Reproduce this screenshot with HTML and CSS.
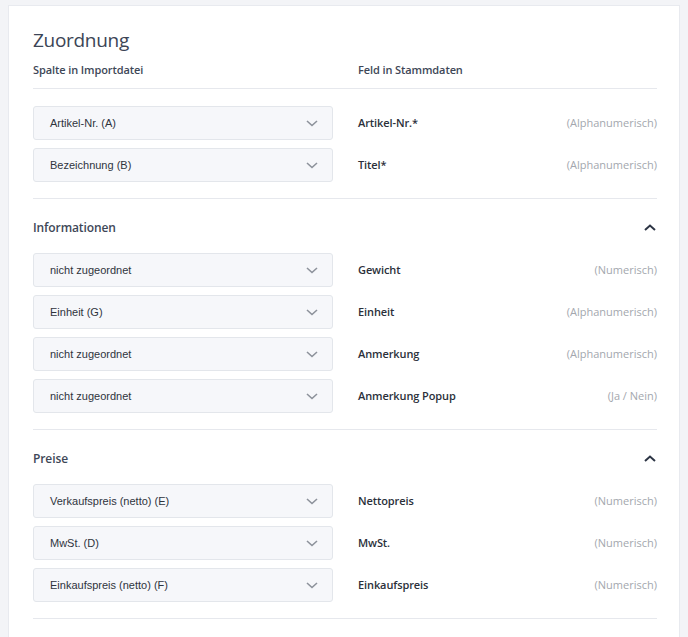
FILE: index.html
```html
<!DOCTYPE html>
<html lang="de">
<head>
<meta charset="utf-8">
<title>Zuordnung</title>
<link rel="stylesheet" href="styles.css">
</head>
<body>
<main class="card">
  <h1 class="title">Zuordnung</h1>
  <div class="cols-head">
    <div class="col-h">Spalte in Importdatei</div>
    <div class="col-h">Feld in Stammdaten</div>
  </div>

  <section class="group first">
    <div class="rows">
      <div class="row">
        <div class="select"><span>Artikel-Nr. (A)</span><svg class="chev" viewBox="0 0 12 7"><path d="M1 1l5 4.5L11 1"/></svg></div>
        <div class="field"><span class="name">Artikel-Nr.*</span><span class="type">(Alphanumerisch)</span></div>
      </div>
      <div class="row">
        <div class="select"><span>Bezeichnung (B)</span><svg class="chev" viewBox="0 0 12 7"><path d="M1 1l5 4.5L11 1"/></svg></div>
        <div class="field"><span class="name">Titel*</span><span class="type">(Alphanumerisch)</span></div>
      </div>
    </div>
  </section>

  <section class="group">
    <div class="group-head"><span>Informationen</span><svg class="up" viewBox="0 0 12 7"><path d="M1 6l5-4.5L11 6"/></svg></div>
    <div class="rows">
      <div class="row">
        <div class="select"><span>nicht zugeordnet</span><svg class="chev" viewBox="0 0 12 7"><path d="M1 1l5 4.5L11 1"/></svg></div>
        <div class="field"><span class="name">Gewicht</span><span class="type">(Numerisch)</span></div>
      </div>
      <div class="row">
        <div class="select"><span>Einheit (G)</span><svg class="chev" viewBox="0 0 12 7"><path d="M1 1l5 4.5L11 1"/></svg></div>
        <div class="field"><span class="name">Einheit</span><span class="type">(Alphanumerisch)</span></div>
      </div>
      <div class="row">
        <div class="select"><span>nicht zugeordnet</span><svg class="chev" viewBox="0 0 12 7"><path d="M1 1l5 4.5L11 1"/></svg></div>
        <div class="field"><span class="name">Anmerkung</span><span class="type">(Alphanumerisch)</span></div>
      </div>
      <div class="row">
        <div class="select"><span>nicht zugeordnet</span><svg class="chev" viewBox="0 0 12 7"><path d="M1 1l5 4.5L11 1"/></svg></div>
        <div class="field"><span class="name">Anmerkung Popup</span><span class="type">(Ja / Nein)</span></div>
      </div>
    </div>
  </section>

  <section class="group">
    <div class="group-head"><span>Preise</span><svg class="up" viewBox="0 0 12 7"><path d="M1 6l5-4.5L11 6"/></svg></div>
    <div class="rows">
      <div class="row">
        <div class="select"><span>Verkaufspreis (netto) (E)</span><svg class="chev" viewBox="0 0 12 7"><path d="M1 1l5 4.5L11 1"/></svg></div>
        <div class="field"><span class="name">Nettopreis</span><span class="type">(Numerisch)</span></div>
      </div>
      <div class="row">
        <div class="select"><span>MwSt. (D)</span><svg class="chev" viewBox="0 0 12 7"><path d="M1 1l5 4.5L11 1"/></svg></div>
        <div class="field"><span class="name">MwSt.</span><span class="type">(Numerisch)</span></div>
      </div>
      <div class="row">
        <div class="select"><span>Einkaufspreis (netto) (F)</span><svg class="chev" viewBox="0 0 12 7"><path d="M1 1l5 4.5L11 1"/></svg></div>
        <div class="field"><span class="name">Einkaufspreis</span><span class="type">(Numerisch)</span></div>
      </div>
    </div>
  </section>
</main>
</body>
</html>
```

FILE: styles.css
```css
* { box-sizing: border-box; }

html, body {
  margin: 0;
  padding: 0;
  background: #f3f4f7;
  height: 100%;
}

body {
  font-family: "Open Sans", "Noto Sans", sans-serif;
  color: #2e3440;
  overflow: hidden;
}

.card {
  margin: 5px 8px 0 8px;
  background: #ffffff;
  border: 1px solid #e8eaef;
  border-bottom: none;
  padding: 22px 22px 0 24px;
  height: calc(100vh - 5px);
  overflow: hidden;
}

.title {
  margin: 0;
  font-size: 19px;
  line-height: 24px;
  font-weight: 400;
  letter-spacing: -0.3px;
  color: #3c4556;
}

.cols-head {
  display: grid;
  grid-template-columns: 300px 1fr;
  column-gap: 25px;
  margin-top: 10px;
  padding-bottom: 10px;
  border-bottom: 1px solid #e6e8ed;
}

.col-h {
  font-size: 11px;
  line-height: 16px;
  font-weight: 600;
  letter-spacing: -0.1px;
  color: #3e4757;
}

.group {
  padding: 18px 0 16px;
  border-bottom: 1px solid #e6e8ed;
}

.group.first {
  padding-top: 17px;
}

.group-head {
  display: flex;
  align-items: center;
  justify-content: space-between;
  height: 20px;
  margin-bottom: 16px;
  font-size: 12px;
  font-weight: 600;
  letter-spacing: -0.1px;
  color: #3e4757;
}

.up {
  width: 12px;
  height: 7px;
  margin-right: 1px;
  fill: none;
  stroke: #2d3545;
  stroke-width: 2;
}

.rows {
  display: flex;
  flex-direction: column;
  gap: 8px;
}

.row {
  display: grid;
  grid-template-columns: 300px 1fr;
  column-gap: 25px;
  align-items: center;
}

.select {
  height: 34px;
  display: flex;
  align-items: center;
  justify-content: space-between;
  padding: 0 14px 0 16px;
  background: #f6f7fa;
  border: 1px solid #e3e6eb;
  border-radius: 3px;
  font-family: "Liberation Sans", Arial, sans-serif;
  font-size: 11px;
  color: #2f343d;
}

.chev {
  width: 12px;
  height: 7px;
  fill: none;
  stroke: #8d929b;
  stroke-width: 1.6;
}

.field {
  display: flex;
  justify-content: space-between;
  align-items: center;
  font-size: 11px;
  line-height: 14px;
  padding-bottom: 1px;
}

.name {
  font-weight: 600;
  letter-spacing: -0.1px;
  color: #2b303a;
}

.type {
  color: #a3a7ae;
}
```
